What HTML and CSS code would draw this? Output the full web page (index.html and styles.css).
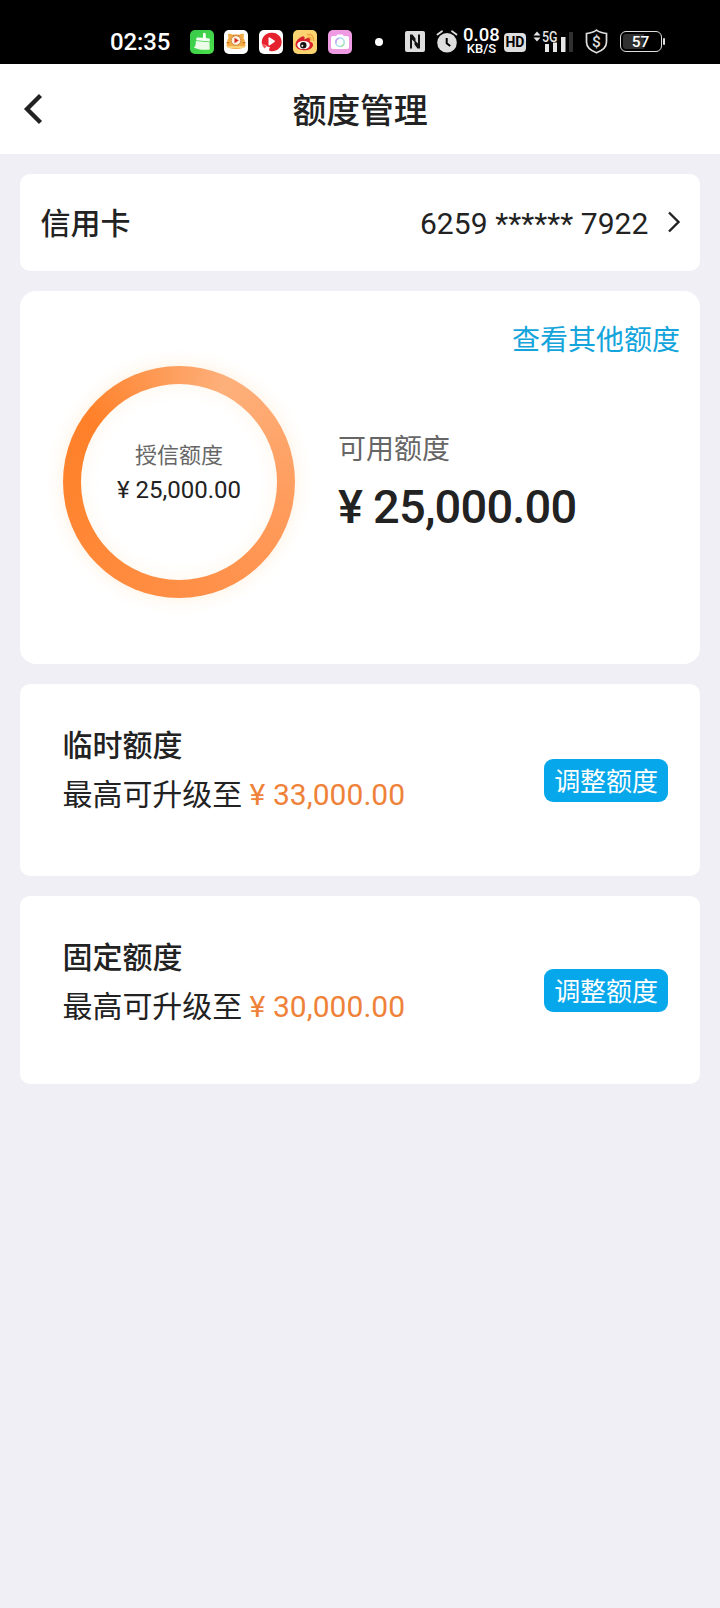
FILE: index.html
```html
<!DOCTYPE html>
<html lang="zh-CN">
<head>
<meta charset="utf-8">
<title>额度管理</title>
<link rel="stylesheet" href="styles.css">
</head>
<body>
<div class="status">
  <span class="clock">02:35</span>
  <div class="apps">
    <svg width="24" height="24" viewBox="0 0 24 24"><defs><linearGradient id="g" x1="0" y1="0" x2="1" y2="1"><stop offset="0" stop-color="#38c94a"/><stop offset="1" stop-color="#49e04b"/></linearGradient></defs><rect width="24" height="24" rx="5" fill="url(#g)"/><path d="M13 3.700q1.500-1.700 2.700.1l.3 4.200 3.300.5q.8.300.6 2.900L6.200 10.200q0-2.500.8-2.800l5.900.3z" fill="#f5fff3"/><path d="M5.900 11l13.600 1.300.2 7.200q-6 .8-11.200-.2L4 17.800q2.300-2.500 1.900-6.800z" fill="#edfce9"/></svg>
    <svg width="24" height="24" viewBox="0 0 24 24"><rect width="24" height="24" rx="5" fill="#fff"/><path d="M4.500 8L4 4q2.500-1 4.500.7 3.500-1 7 0Q17.500 3 20 4l-.5 4q1.500 2 1.700 5 1 4-2 5-7 2-14.400 0-3-1-2-5 .2-3 1.700-5z" fill="#f3aa45"/><path d="M2.500 12.500l3 .5M18.500 13l3-.5M9 5l.5 1.500M15 5l-.5 1.500" stroke="#b96820" stroke-width="1"/><circle cx="12" cy="10.500" r="4.800" fill="#fff3df" stroke="#c27a38" stroke-width=".8"/><path d="M10.500 7.800l4.300 2.700-4.300 2.700z" fill="#d82f25"/><path d="M4 16.500q2 1.500 4 0 2 1.500 4 0 2 1.500 4 0 2 1.500 4 0" fill="none" stroke="#ffe08a" stroke-width="1.400"/></svg>
    <svg width="24" height="24" viewBox="0 0 24 24"><rect width="24" height="24" rx="5" fill="#fff"/><path d="M12 2.800A9.300 9.300 0 1 1 11 21q-1.500-.3-.8-2l.8-1.700q-3-.3-4.600-2.300L3 14A9.300 9.300 0 0 1 12 2.800z" fill="#e4212d"/><path d="M2.700 13q3 1 5 3.500L5.500 18.500Q3 16 2.700 13z" fill="#f2575c"/><path d="M9.500 8.200q0-1.400 1.300-.8l4.700 3.200q1 .7 0 1.400l-4.700 3.200q-1.300.6-1.300-.8z" fill="#fff"/></svg>
    <svg width="24" height="24" viewBox="0 0 24 24"><rect width="24" height="24" rx="5" fill="#fbd371"/><path d="M2.500 15q0-4 4-7t5-.8v2.300q4-2.500 5.500-.8l-.2 2.800q3.700 1 3.200 4-1 4.500-9 4.800Q3 20 2.500 15z" fill="#d9232c"/><ellipse cx="10.500" cy="15" rx="6.300" ry="4.100" fill="#fff"/><circle cx="10.300" cy="15.200" r="3.200" fill="#17110f"/><circle cx="9.300" cy="15.800" r="1" fill="#fff"/><path d="M14.500 4.500q6-.8 6 5.700M15 7.200q3-.2 3 2.700" fill="none" stroke="#efa540" stroke-width="1.500" stroke-linecap="round"/></svg>
    <svg width="24" height="24" viewBox="0 0 24 24"><rect width="24" height="24" rx="5" fill="#ee9be4"/><path d="M5 6h3l1.500-1.500h5L16 6h3q2 0 2 2v9q0 2-2 2H5q-2 0-2-2V8q0-2 2-2z" fill="#fff"/><circle cx="12" cy="12.300" r="4.200" fill="#fff" stroke="#a7dfe8" stroke-width="1.500"/><path d="M8 13.500a4.200 4.200 0 0 1 3-5.300" stroke="#c7a4ef" stroke-width="1.500" fill="none"/><path d="M13 16.400a4.200 4.200 0 0 0 3.200-3" stroke="#a7e6a9" stroke-width="1.500" fill="none"/></svg>
  </div>
  <i class="dot"></i>
  <svg class="nfc" width="20" height="21" viewBox="0 0 20 21"><rect width="20" height="21" rx="2" fill="#dedede"/><path d="M6 17.500V6M14 15V3.500" fill="none" stroke="#111" stroke-width="2"/><path d="M5 3.500h2.500l3 4v4.500L5 6.500zM15 17.500h-2.500l-3-4V9L15 14.500z" fill="#111"/></svg>
  <svg class="alarm" width="22" height="24" viewBox="0 0 22 24"><circle cx="11" cy="13.800" r="9.800" fill="#dedede"/><path d="M1.500 5.500L6 2.200M20.500 5.500L16 2.200" stroke="#dedede" stroke-width="1.800" stroke-linecap="round"/><path d="M10.700 9v5.200l3.500 2.800" fill="none" stroke="#000" stroke-width="2"/></svg>
  <div class="rate"><span class="num">0.08</span><span class="unit">KB/S</span></div>
  <span class="hd">HD</span>
  <svg class="signal" width="42" height="24" viewBox="0 0 42 24"><path d="M.5 6.500L4 2.500l3.500 4zM.5 8.500L4 12.500l3.500-4z" fill="#e4e4e4"/><text x="9" y="12.500" class="g5" textLength="15.500" lengthAdjust="spacingAndGlyphs">5G</text><path d="M12 15h4v8h-4zM20 13.500h4V23h-4zM28 8h4.500v15H28z" fill="#e6e6e6"/><path d="M36 3h4v20h-4z" fill="#303030"/></svg>
  <svg class="shield" width="23" height="25" viewBox="0 0 23 25"><path d="M11.500 1.200Q15 4 21.500 4.500V13q0 7-10 10.800Q1.500 20 1.500 13V4.500Q8 4 11.500 1.200z" fill="none" stroke="#dedede" stroke-width="1.700"/><text x="11.500" y="17.500" class="dollar" text-anchor="middle">$</text></svg>
  <div class="battery"><span>57</span></div><i class="nub"></i>
</div>
<header class="nav">
  <svg class="back" width="20" height="32" viewBox="0 0 20 32"><path d="M17.500 2.500L4 16l13.500 13.500" fill="none" stroke="#222" stroke-width="4.300"/></svg>
  <h1>额度管理</h1>
</header>
<main>
  <section class="card account">
    <span class="strong">信用卡</span>
    <span class="number">6259 ****** 7922</span>
    <svg width="14" height="22" viewBox="0 0 14 22"><path d="M2 1.500L11.500 11 2 20.500" fill="none" stroke="#222" stroke-width="2.400"/></svg>
  </section>
  <section class="card overview">
    <a class="other">查看其他额度</a>
    <div class="amounts">
      <div class="ring"><div class="hole"><span class="caption">授信额度</span><span class="credit">¥ 25,000.00</span></div></div>
      <div class="avail"><span class="label">可用额度</span><span class="big">¥ 25,000.00</span></div>
    </div>
  </section>
  <section class="card offer temp">
    <div><div class="strong">临时额度</div><div class="line">最高可升级至 <span class="orange">¥ 33,000.00</span></div></div>
    <a class="btn">调整额度</a>
  </section>
  <section class="card offer fixed">
    <div><div class="strong">固定额度</div><div class="line">最高可升级至 <span class="orange">¥ 30,000.00</span></div></div>
    <a class="btn">调整额度</a>
  </section>
</main>
</body>
</html>
```
FILE: styles.css
```css
* { box-sizing: border-box; }
body { margin: 0; height: 1608px; overflow: hidden; background: #efeff5; color: #222; font-family: Roboto, "Noto Sans CJK SC", sans-serif; }
svg { display: block; flex: none; }
.status { height: 64px; background: #000; color: #fff; display: flex; align-items: flex-start; padding-left: 110px; }
.clock { width: 80px; margin-top: 28px; font-size: 24px; line-height: 29px; font-weight: 500; letter-spacing: -.1px; }
.apps { display: flex; gap: 10.400px; margin-top: 30px; }
.dot { width: 8px; height: 8px; border-radius: 50%; background: #fff; margin: 38px 0 0 23.400px; }
.nfc { margin: 31px 0 0 22px; }
.alarm { margin: 29px 0 0 11px; }
.rate { width: 36px; margin: 27px 0 0 5.500px; display: flex; flex-direction: column; align-items: center; font-weight: 500; }
.num { font-size: 18.500px; line-height: 17px; height: 15px; }
.unit { font-size: 13px; line-height: 14px; }
.hd { width: 22px; height: 19px; margin: 33px 0 0 4.500px; border-radius: 4px; background: #dedede; color: #000; font-size: 14px; line-height: 19px; font-weight: 700; text-align: center; }
.signal { margin: 29px 0 0 7.500px; }
.g5 { font-size: 14.500px; font-weight: 500; fill: #e4e4e4; }
.shield { margin: 29px 0 0 10px; }
.dollar { font-size: 15.500px; font-weight: 500; fill: #dedede; }
.battery { width: 42px; height: 21px; margin: 31px 0 0 11.500px; border: 1.500px solid #dedede; border-radius: 6px; padding: 2px 14px 2px 2px; }
.battery span { display: block; width: 35px; height: 15px; border-radius: 3px; background: linear-gradient(90deg, #303030 21px, #000 21px); font-size: 15.500px; line-height: 16px; font-weight: 500; text-align: center; }
.nub { width: 2px; height: 7px; margin: 38px 0 0 1px; background: #dedede; border-radius: 1px; }
.nav { height: 90px; background: #fff; display: grid; grid-template-columns: 60px 1fr 60px; align-items: center; }
.back { margin-left: 23px; margin-bottom: 1px; }
h1 { margin: 0; padding-top: 4px; font-size: 34px; line-height: 50px; font-weight: 500; text-align: center; letter-spacing: -.2px; }
main { padding: 20px; display: flex; flex-direction: column; gap: 20px; }
.card { background: #fff; border-radius: 10px; }
.strong { font-size: 30px; line-height: 44px; font-weight: 500; }
.account { height: 96.500px; display: flex; align-items: center; padding: 0 19px 0 20.500px; }
.account .strong { padding-top: 4px; }
.number { margin-left: auto; margin-right: 18.500px; padding-top: 2px; font-size: 30px; letter-spacing: .08px; }
.overview { height: 373.500px; border-radius: 16px; padding: 30px 20px 0 43px; }
.other { display: block; text-align: right; color: #13a4db; font-size: 28px; line-height: 40px; }
.amounts { display: flex; margin-top: 5px; }
.ring { width: 232px; height: 232px; padding: 18px; border-radius: 50%; background: conic-gradient(from 25deg, #fdb07b, #ff9c5d 75deg, #ff8f47 150deg, #ff842e 240deg, #ff8029 280deg, #fdb07b); box-shadow: 0 0 18px rgba(255,175,80,.2); }
.hole { height: 196px; border-radius: 50%; background: #fff; box-shadow: inset 0 0 18px rgba(255,175,80,.13); display: flex; flex-direction: column; align-items: center; padding-top: 55px; white-space: nowrap; }
.caption { font-size: 22px; line-height: 34px; color: #666; }
.credit { font-size: 24px; line-height: 35px; }
.avail { display: flex; flex-direction: column; margin: 63px 0 0 43px; color: #222; }
.label { font-size: 28px; line-height: 42px; color: #666; }
.big { font-size: 47px; line-height: 54px; margin-top: 9px; font-weight: 500; letter-spacing: -.8px; }
.offer { display: flex; justify-content: space-between; align-items: flex-start; padding: 40px 32px 0 42.500px; }
.temp { height: 192px; }
.fixed { height: 187.500px; }
.line { font-size: 30px; line-height: 44px; margin-top: 5px; letter-spacing: -.05px; }
.orange { color: #ef8239; letter-spacing: .05px; }
.btn { width: 124px; height: 43px; margin-top: 35px; padding-top: 2px; border-radius: 9px; background: #07a8eb; color: #fff; font-size: 26px; line-height: 43px; text-align: center; letter-spacing: -.1px; }
.fixed .btn { margin-top: 33px; }
```
